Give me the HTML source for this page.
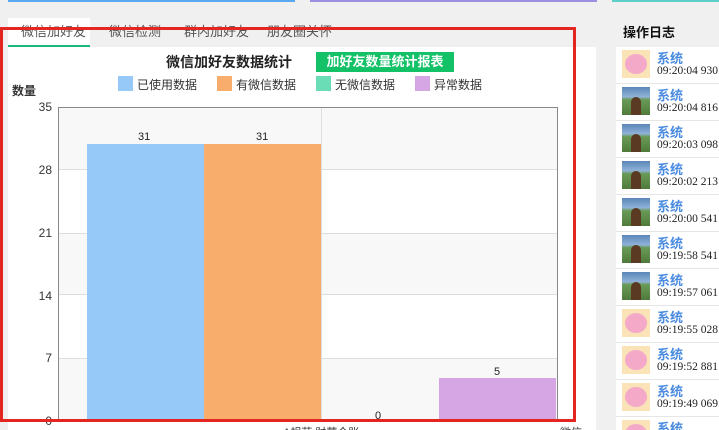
<!DOCTYPE html>
<html style="width:719px;height:430px;overflow:hidden"><head><meta charset="utf-8"><style>
*{margin:0;padding:0;box-sizing:border-box}
body{width:719px;height:430px;overflow:hidden;background:#f0f0f0;font-family:"Liberation Sans","Noto Sans CJK SC",sans-serif;position:relative}
.a{position:absolute}
.t{font-size:12px;color:#333;white-space:nowrap}
.tab{top:21px;font-size:13px;color:#555}
.yl{font-size:12px;color:#333;width:20px;text-align:right;left:32px}
.ent{left:616px;width:103px;height:37px;background:#fff;border-bottom:1px solid #e6e6e6}
.av{position:absolute;left:6px;top:3px;width:28px;height:28px}
.nm{position:absolute;left:41px;top:1px;color:#4a8be0;font-size:13px;font-weight:bold}
.tm{position:absolute;left:41px;top:18px;font-family:"Liberation Serif",serif;font-size:11.5px;color:#222;white-space:nowrap}
.pig{background:#fbe3b8}
.pig:after{content:"";position:absolute;left:3px;top:4px;width:22px;height:20px;border-radius:50%;background:#f4a9c9}
.land{background:linear-gradient(#5b86b8 0,#8fb2d8 35%,#6a9a58 45%,#4f7a3b 100%)}
.land:after{content:"";position:absolute;left:9px;top:10px;width:10px;height:18px;border-radius:5px 5px 0 0;background:#5a3a22}
</style></head><body>
<div class="a" style="left:8px;top:0;width:287px;height:2px;background:#5aa8f0"></div>
<div class="a" style="left:310px;top:0;width:287px;height:2px;background:#9a8fe0"></div>
<div class="a" style="left:612px;top:0;width:107px;height:2px;background:#5ccfc8"></div>

<div class="a" style="left:8px;top:18px;width:82px;height:29px;background:#fff;border-bottom:2px solid #1ab97a"></div>
<div class="a tab" style="left:21px">微信加好友</div>
<div class="a tab" style="left:109px">微信检测</div>
<div class="a tab" style="left:184px">群内加好友</div>
<div class="a tab" style="left:267px">朋友圈关怀</div>
<div class="a" style="left:8px;top:47px;width:588px;height:383px;background:#fff"></div>

<div class="a" style="left:166px;top:52px;font-size:14px;font-weight:bold;color:#222">微信加好友数据统计</div>
<div class="a" style="left:316px;top:52px;width:138px;height:20px;background:#13c167;color:#fff;font-size:13px;font-weight:bold;text-align:center;line-height:20px">加好友数量统计报表</div>

<div class="a" style="left:118px;top:76px;width:15px;height:15px;background:#96c8f8"></div><div class="a t" style="left:137px;top:76px">已使用数据</div>
<div class="a" style="left:217px;top:76px;width:15px;height:15px;background:#f9ad6c"></div><div class="a t" style="left:236px;top:76px">有微信数据</div>
<div class="a" style="left:316px;top:76px;width:15px;height:15px;background:#6adcb6"></div><div class="a t" style="left:335px;top:76px">无微信数据</div>
<div class="a" style="left:415px;top:76px;width:15px;height:15px;background:#d6a6e4"></div><div class="a t" style="left:434px;top:76px">异常数据</div>

<div class="a" style="left:12px;top:82px;font-size:12px;font-weight:bold;color:#333">数量</div>

<div class="a" style="left:58px;top:107px;width:500px;height:315px;border:1px solid #888;border-bottom:none;background:#fff"></div>
<div class="a" style="left:59px;top:108px;width:498px;height:62px;background:#f8f8f8;border-bottom:1px solid #ddd"></div>
<div class="a" style="left:59px;top:233px;width:498px;height:62px;background:#f8f8f8;border-top:1px solid #ddd;border-bottom:1px solid #ddd"></div>
<div class="a" style="left:59px;top:358px;width:498px;height:63px;background:#f8f8f8;border-top:1px solid #ddd"></div>
<div class="a" style="left:321px;top:108px;width:1px;height:313px;background:#ddd"></div>
<div class="a yl" style="top:100px">35</div><div class="a yl" style="top:163px">28</div><div class="a yl" style="top:226px">21</div><div class="a yl" style="top:289px">14</div><div class="a yl" style="top:351px">7</div><div class="a yl" style="top:414px">0</div>

<div class="a" style="left:87px;top:144px;width:117px;height:277px;background:#96c8f8"></div>
<div class="a" style="left:204px;top:144px;width:117px;height:277px;background:#f9ad6c"></div>
<div class="a" style="left:439px;top:378px;width:117px;height:43px;background:#d6a6e4"></div>
<div class="a" style="left:138px;top:131px;font-size:11px;color:#222">31</div>
<div class="a" style="left:256px;top:131px;font-size:11px;color:#222">31</div>
<div class="a" style="left:375px;top:410px;font-size:11px;color:#222">0</div>
<div class="a" style="left:494px;top:366px;font-size:11px;color:#222">5</div>
<div class="a" style="left:283px;top:424px;font-size:11px;color:#333">A规范 财营合账</div>
<div class="a" style="left:560px;top:424px;font-size:11px;color:#333">微信</div>

<div class="a" style="left:0;top:27px;width:576px;height:395px;border:3px solid #e3261f"></div>

<div class="a" style="left:623px;top:22px;font-size:13px;font-weight:bold;color:#111">操作日志</div>
<div class="a ent" style="top:47px"><div class="av pig"></div><div class="nm">系统</div><div class="tm">09:20:04 930</div></div>
<div class="a ent" style="top:84px"><div class="av land"></div><div class="nm">系统</div><div class="tm">09:20:04 816</div></div>
<div class="a ent" style="top:121px"><div class="av land"></div><div class="nm">系统</div><div class="tm">09:20:03 098</div></div>
<div class="a ent" style="top:158px"><div class="av land"></div><div class="nm">系统</div><div class="tm">09:20:02 213</div></div>
<div class="a ent" style="top:195px"><div class="av land"></div><div class="nm">系统</div><div class="tm">09:20:00 541</div></div>
<div class="a ent" style="top:232px"><div class="av land"></div><div class="nm">系统</div><div class="tm">09:19:58 541</div></div>
<div class="a ent" style="top:269px"><div class="av land"></div><div class="nm">系统</div><div class="tm">09:19:57 061</div></div>
<div class="a ent" style="top:306px"><div class="av pig"></div><div class="nm">系统</div><div class="tm">09:19:55 028</div></div>
<div class="a ent" style="top:343px"><div class="av pig"></div><div class="nm">系统</div><div class="tm">09:19:52 881</div></div>
<div class="a ent" style="top:380px"><div class="av pig"></div><div class="nm">系统</div><div class="tm">09:19:49 069</div></div>
<div class="a ent" style="top:417px"><div class="av pig"></div><div class="nm">系统</div><div class="tm">09:19:47 000</div></div>
</body></html>
